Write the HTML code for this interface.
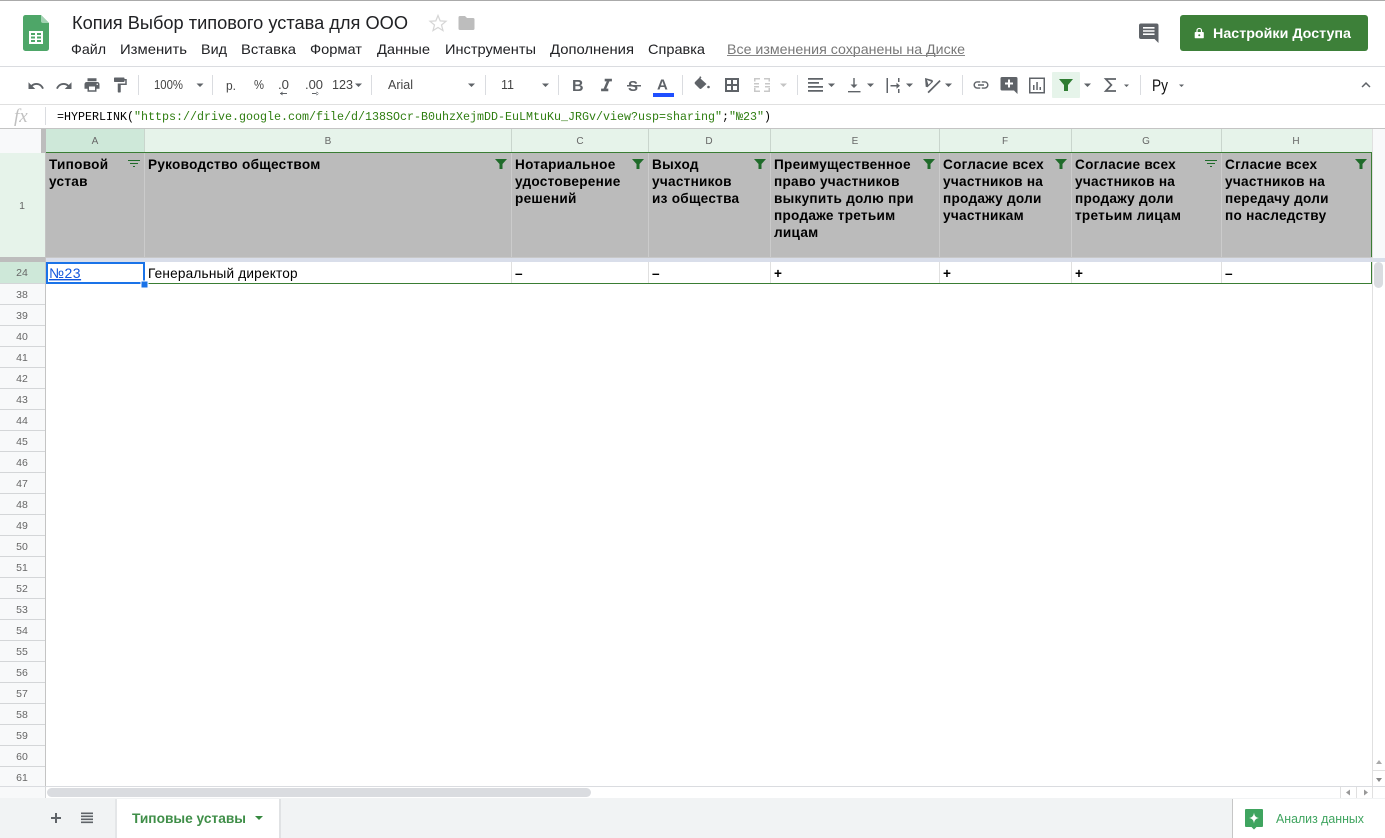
<!DOCTYPE html>
<html lang="ru"><head><meta charset="utf-8"><title>Копия Выбор типового устава для ООО</title>
<style>
html,body{margin:0;padding:0;width:1385px;height:838px;overflow:hidden;background:#fff}
svg{display:block;position:absolute;left:0;top:0}
text{font-family:"Liberation Sans",sans-serif}
.m{font-size:13.6px;fill:#202124}
.tb{font-size:12.8px;fill:#444}
.h{font-size:13.6px;font-weight:bold;fill:#000;letter-spacing:.27px}
.c{font-size:13.6px;fill:#000;letter-spacing:.2px}
.l{font-size:10px;fill:#666;text-anchor:middle}
.r{font-size:10.5px;fill:#666;text-anchor:middle}
.i{fill:#5f6368}
</style></head><body>
<svg width="1385" height="838" viewBox="0 0 1385 838" xmlns="http://www.w3.org/2000/svg">
<rect width="1385" height="838" fill="#fff"/>
<rect width="1385" height="1" fill="#aaa"/>

<!-- logo -->
<path d="M26 15h15l8 8v25.500a2.500 2.500 0 0 1-2.500 2.500h-21a2.500 2.500 0 0 1-2.500-2.500v-31a2.500 2.500 0 0 1 2.500-2.500z" fill="#4ea668"/>
<path d="M41 15l8 8h-6a2 2 0 0 1-2-2z" fill="#a3d3b3"/>
<path d="M29 31h14v13h-14zM31 33v2h4v-2zM37 33v2h4v-2zM31 36.500v2h4v-2zM37 36.500v2h4v-2zM31 40v2h4v-2zM37 40v2h4v-2z" fill="#fff" fill-rule="evenodd"/>

<text x="72" y="29" font-size="18" fill="#202124" textLength="336" lengthAdjust="spacingAndGlyphs">Копия Выбор типового устава для ООО</text>
<path d="M438 15.500l2.200 5.400 5.800.4-4.500 3.700 1.500 5.600-5-3.100-5 3.100 1.500-5.600-4.500-3.700 5.800-.4z" fill="none" stroke="#d5d5d5" stroke-width="1.200"/>
<path d="M460 16h5l2 2h6a1.500 1.500 0 0 1 1.500 1.500v9a1.500 1.500 0 0 1-1.500 1.500h-13a1.500 1.500 0 0 1-1.500-1.500v-11a1.500 1.500 0 0 1 1.500-1.500z" fill="#bdbdbd"/>

<text class="m" x="71" y="54" textLength="35" lengthAdjust="spacingAndGlyphs">Файл</text>
<text class="m" x="120" y="54" textLength="67" lengthAdjust="spacingAndGlyphs">Изменить</text>
<text class="m" x="201" y="54" textLength="26" lengthAdjust="spacingAndGlyphs">Вид</text>
<text class="m" x="241" y="54" textLength="55" lengthAdjust="spacingAndGlyphs">Вставка</text>
<text class="m" x="310" y="54" textLength="52" lengthAdjust="spacingAndGlyphs">Формат</text>
<text class="m" x="377" y="54" textLength="53" lengthAdjust="spacingAndGlyphs">Данные</text>
<text class="m" x="445" y="54" textLength="91" lengthAdjust="spacingAndGlyphs">Инструменты</text>
<text class="m" x="550" y="54" textLength="84" lengthAdjust="spacingAndGlyphs">Дополнения</text>
<text class="m" x="648" y="54" textLength="57" lengthAdjust="spacingAndGlyphs">Справка</text>
<text x="727" y="54" font-size="13.6" fill="#777" textLength="238" lengthAdjust="spacingAndGlyphs">Все изменения сохранены на Диске</text>
<rect x="727" y="55" width="238" height="1" fill="#888"/>

<!-- comments + share -->
<path d="M1141 23.500h15.500a2 2 0 0 1 2 2v17.500l-4-4h-13.500a2 2 0 0 1-2-2v-11.500a2 2 0 0 1 2-2z" fill="#5f6368"/>
<path d="M1143 27h11.500v1.600h-11.500zM1143 30.200h11.500v1.600h-11.500zM1143 33.400h11.500v1.600h-11.500z" fill="#fff"/>
<rect x="1180" y="15" width="188" height="36" rx="3" fill="#3d8039"/>
<path d="M1195.500 32h7.500a.8.8 0 0 1 .8.800v4.700a.8.8 0 0 1-.8.800h-7.500a.8.8 0 0 1-.8-.8v-4.700a.8.8 0 0 1 .8-.8z" fill="#fff"/>
<path d="M1197 32v-1.300a2.250 2.250 0 0 1 4.500 0v1.300" fill="none" stroke="#fff" stroke-width="1.200"/>
<circle cx="1199.250" cy="35.200" r="1" fill="#3d8039"/>
<text x="1213" y="38" font-size="13.500" font-weight="bold" fill="#fff" textLength="138" lengthAdjust="spacingAndGlyphs">Настройки Доступа</text>

<!-- toolbar -->
<rect y="66" width="1385" height="1" fill="#dadce0"/>
<rect y="104" width="1385" height="1" fill="#e0e0e0"/>
<g fill="#dadce0">
<rect x="138" y="75" width="1" height="20"/><rect x="212" y="75" width="1" height="20"/><rect x="371" y="75" width="1" height="20"/><rect x="485" y="75" width="1" height="20"/><rect x="558" y="75" width="1" height="20"/><rect x="682" y="75" width="1" height="20"/><rect x="797" y="75" width="1" height="20"/><rect x="962" y="75" width="1" height="20"/><rect x="1140" y="75" width="1" height="20"/>
</g>
<g class="i">
<path transform="translate(27 77) scale(.75)" d="M12.500 8c-2.650 0-5.050.99-6.900 2.600L2 7v9h9l-3.620-3.620c1.390-1.160 3.160-1.880 5.120-1.880 3.540 0 6.550 2.310 7.600 5.500l2.370-.78C21.080 11.030 17.150 8 12.500 8z"/>
<path transform="translate(55 77) scale(.75)" d="M18.400 10.600C16.550 8.990 14.150 8 11.500 8c-4.650 0-8.580 3.030-9.960 7.220L3.900 16c1.050-3.190 4.050-5.500 7.600-5.500 1.950 0 3.730.72 5.120 1.880L13 16h9V7l-3.600 3.600z"/>
<path transform="translate(83 76) scale(.75)" d="M19 8H5c-1.660 0-3 1.340-3 3v6h4v4h12v-4h4v-6c0-1.660-1.340-3-3-3zm-3 11H8v-5h8v5zm3-7c-.55 0-1-.45-1-1s.45-1 1-1 1 .45 1 1-.45 1-1 1zm-1-9H6v4h12V3z"/>
<path transform="translate(111 76) scale(.75)" d="M18 4V3c0-.55-.45-1-1-1H5c-.55 0-1 .45-1 1v4c0 .55.45 1 1 1h12c.55 0 1-.45 1-1V6h1v4H9v11c0 .55.45 1 1 1h2c.55 0 1-.45 1-1v-9h8V4h-3z"/>
</g>
<text class="tb" x="154" y="89" textLength="29" lengthAdjust="spacingAndGlyphs">100%</text>
<text class="tb" x="226" y="90" textLength="10" lengthAdjust="spacingAndGlyphs">р.</text>
<text class="tb" x="254" y="89" textLength="10" lengthAdjust="spacingAndGlyphs">%</text>
<text class="tb" x="278" y="89" textLength="11" lengthAdjust="spacingAndGlyphs">.0</text>
<text class="tb" x="305" y="89" textLength="18" lengthAdjust="spacingAndGlyphs">.00</text>
<text class="tb" x="332" y="89" textLength="21" lengthAdjust="spacingAndGlyphs">123</text>
<text class="tb" x="388" y="89" textLength="25" lengthAdjust="spacingAndGlyphs">Arial</text>
<text class="tb" x="501" y="89" textLength="13" lengthAdjust="spacingAndGlyphs">11</text>
<g fill="#5f6368">
<path d="M280 93h7v1h-7zM280 93.500l2.500-2v4zM312 93h7v1h-7zM319 93.500l-2.500-2v4z"/>
<path d="M196.500 83.500h7l-3.500 3.500zM355 83.500h7l-3.500 3.500zM468 83.500h7l-3.500 3.500zM542 83.500h7l-3.500 3.500zM828 83.500h7l-3.500 3.500zM867 83.500h7l-3.500 3.500zM906 83.500h7l-3.500 3.500zM945 83.500h7l-3.500 3.500zM1084 83.500h7l-3.500 3.500zM1124 84.500h5l-2.500 2.500zM1179 84.500h5l-2.500 2.500z"/>
</g>
<path d="M780 83.500h7l-3.500 3.500z" fill="#c4c4c4"/>
<text x="572" y="91" font-size="16" font-weight="bold" fill="#5f6368">B</text>
<path transform="translate(595.700 75.100) scale(.9)" fill="#5f6368" d="M10 4v3h2.210l-3.420 8H6v3h8v-3h-2.210l3.420-8H18V4z"/>
<text x="628" y="91" font-size="15" font-weight="bold" fill="#5f6368">S</text>
<rect x="627" y="85" width="14" height="1.500" fill="#5f6368"/>
<text x="657" y="89.500" font-size="15" font-weight="bold" fill="#5f6368">A</text>
<rect x="653" y="93" width="21" height="4" fill="#1f4fff"/>
<g fill="#5f6368">
<path d="M700 76l1.500 1.500-1 1 6 5.500-5 4.500a1.500 1.500 0 0 1-2 0l-4.500-4.500a1.500 1.500 0 0 1 0-2l4.500-4.500z"/>
<circle cx="708.500" cy="87" r="1.300"/>
<path d="M725 78h14v14h-14zM727 80v4h4v-4zM733 80v4h4v-4zM727 86v4h4v-4zM733 86v4h4v-4z" fill-rule="evenodd"/>
<path d="M808 78h15v1.800h-15zM808 82h11v1.800h-11zM808 86h15v1.800h-15zM808 90h15v1.800h-15z"/>
<path d="M853.300 78h1.400v6.500h2.800l-3.500 3.500-3.500-3.500h2.800zM848 91h12.500v1.400h-12.500z"/>
<path d="M886.500 78h1.500v15h-1.500zM898 78h1.500v4h-1.500zM898 89h1.500v4h-1.500zM890.500 85h6v-2.200l3.500 3-3.500 3v-2.300h-6z"/>
<path d="M925 78l7.500 2 .5 1.800-5.500 5.500-1.800-.5zM927 80l1.400 4.800 3-3z" fill-rule="evenodd"/>
<path d="M928 93l12-12 1.200 1.200-12 12z" transform="translate(-.5 -1)"/>
<path transform="translate(972 76) scale(.75)" d="M3.900 12c0-1.710 1.390-3.100 3.100-3.100h4V7H7c-2.760 0-5 2.240-5 5s2.240 5 5 5h4v-1.900H7c-1.710 0-3.100-1.390-3.100-3.100zM8 13h8v-2H8v2zm9-6h-4v1.900h4c1.710 0 3.100 1.390 3.100 3.100s-1.390 3.100-3.100 3.100h-4V17h4c2.760 0 5-2.240 5-5s-2.240-5-5-5z"/>
<path d="M1002 77h14a1.500 1.500 0 0 1 1.500 1.500v15.500l-3.500-3.500h-12a1.500 1.500 0 0 1-1.500-1.500v-10.500a1.500 1.500 0 0 1 1.500-1.500z"/>
<path d="M1008 79.500h2v3h3v2h-3v3h-2v-3h-3v-2h3z" fill="#fff"/>
<path d="M1029 77.500h16v16h-16zM1030.500 79v13h13v-13z" fill-rule="evenodd"/>
<path d="M1033 85h1.500v5h-1.500zM1036.300 82h1.500v8h-1.500zM1039.500 87h1.500v3h-1.500z"/>
<path transform="translate(1357 76) scale(.75)" d="M12 8l-6 6 1.410 1.410L12 10.830l4.590 4.580L18 14z"/>
</g>
<path d="M1116 79h-10.300l5.700 6-5.700 6h10.300" fill="none" stroke="#5f6368" stroke-width="1.700"/>
<g fill="#c8c8c8">
<path d="M754 78h6v1.500h-4.500v2h-1.500zM764 78h6v3.500h-1.500v-2h-4.500zM754 88h1.500v2.500h4.500v1.500h-6zM768.500 88h1.500v4h-6v-1.500h4.500zM754 83h5v1.500h-5zM765 83h5v1.500h-5zM754 86h5v1.500h-5zM765 86h5v1.500h-5z"/>
</g>
<rect x="1052" y="72" width="28" height="26" rx="1" fill="#e6f4ea"/>
<path d="M1059 79h14l-5 6v6h-4v-6z" fill="#2f7d32"/>
<text x="1152" y="91" font-size="17" fill="#111" textLength="16" lengthAdjust="spacingAndGlyphs">Ру</text>

<!-- formula bar -->
<text x="14" y="122" font-size="19" font-style="italic" fill="#c0c0c0" style="font-family:'Liberation Serif',serif">fx</text>
<rect x="45" y="107" width="1" height="18" fill="#dadce0"/>
<text x="57" y="120" font-size="12.400" fill="#000" textLength="714" lengthAdjust="spacingAndGlyphs" style="font-family:'Liberation Mono',monospace">=HYPERLINK(<tspan fill="#2e7d10">"https://drive.google.com/file/d/138SOcr-B0uhzXejmDD-EuLMtuKu_JRGv/view?usp=sharing"</tspan>;<tspan fill="#2e7d10">"№23"</tspan>)</text>
<rect y="128" width="1385" height="1" fill="#c4c4c4"/>

<!-- column headers -->
<rect x="0" y="129" width="41" height="24" fill="#f8f9fa"/>
<rect x="41" y="129" width="5" height="24" fill="#bdbdbd"/>
<rect x="46" y="129" width="98" height="23" fill="#cee8d9"/>
<rect x="144" y="129" width="1228" height="23" fill="#e6f3ea"/>
<rect x="1372" y="129" width="13" height="657" fill="#fff"/>
<rect x="1372" y="129" width="13" height="133" fill="#f8f9fa"/>
<g fill="#c9d5cd">
<rect x="144" y="129" width="1" height="23"/><rect x="511" y="129" width="1" height="23"/><rect x="648" y="129" width="1" height="23"/><rect x="770" y="129" width="1" height="23"/><rect x="939" y="129" width="1" height="23"/><rect x="1071" y="129" width="1" height="23"/><rect x="1221" y="129" width="1" height="23"/>
</g>
<text class="l" x="95" y="144">A</text><text class="l" x="328" y="144">B</text><text class="l" x="580" y="144">C</text><text class="l" x="709" y="144">D</text><text class="l" x="855" y="144">E</text><text class="l" x="1005" y="144">F</text><text class="l" x="1146" y="144">G</text><text class="l" x="1296" y="144">H</text>

<!-- row 1 -->
<rect x="46" y="153" width="1326" height="104" fill="#bbbbbb"/>
<rect x="0" y="153" width="45" height="104" fill="#e6f3ea"/>
<g fill="#cbcbcb">
<rect x="144" y="153" width="1" height="104"/><rect x="511" y="153" width="1" height="104"/><rect x="648" y="153" width="1" height="104"/><rect x="770" y="153" width="1" height="104"/><rect x="939" y="153" width="1" height="104"/><rect x="1071" y="153" width="1" height="104"/><rect x="1221" y="153" width="1" height="104"/>
</g>
<rect x="46" y="152" width="1326" height="1" fill="#3a7d34"/>
<rect x="0" y="257" width="46" height="5" fill="#bdbdbd"/>
<rect x="46" y="257" width="1326" height="1" fill="#c8c8c8"/>
<rect x="46" y="258" width="1339" height="4" fill="#d9deea"/>
<text class="r" x="22" y="209">1</text>

<text class="h" x="49" y="169">Типовой</text><text class="h" x="49" y="186">устав</text>
<text class="h" x="148" y="169">Руководство обществом</text>
<text class="h" x="515" y="169">Нотариальное</text><text class="h" x="515" y="186">удостоверение</text><text class="h" x="515" y="203">решений</text>
<text class="h" x="652" y="169">Выход</text><text class="h" x="652" y="186">участников</text><text class="h" x="652" y="203">из общества</text>
<text class="h" x="774" y="169">Преимущественное</text><text class="h" x="774" y="186">право участников</text><text class="h" x="774" y="203">выкупить долю при</text><text class="h" x="774" y="220">продаже третьим</text><text class="h" x="774" y="237">лицам</text>
<text class="h" x="943" y="169">Согласие всех</text><text class="h" x="943" y="186">участников на</text><text class="h" x="943" y="203">продажу доли</text><text class="h" x="943" y="220">участникам</text>
<text class="h" x="1075" y="169">Согласие всех</text><text class="h" x="1075" y="186">участников на</text><text class="h" x="1075" y="203">продажу доли</text><text class="h" x="1075" y="220">третьим лицам</text>
<text class="h" x="1225" y="169">Сгласие всех</text><text class="h" x="1225" y="186">участников на</text><text class="h" x="1225" y="203">передачу доли</text><text class="h" x="1225" y="220">по наследству</text>

<g fill="#1f6b2a">
<path d="M495 159h12l-4.500 5v5h-3v-5z"/><path d="M632 159h12l-4.500 5v5h-3v-5z"/><path d="M754 159h12l-4.500 5v5h-3v-5z"/><path d="M923 159h12l-4.500 5v5h-3v-5z"/><path d="M1055 159h12l-4.500 5v5h-3v-5z"/><path d="M1355 159h12l-4.500 5v5h-3v-5z"/>
<path d="M128 160h12v1h-12zM130 163h8v1h-8zM133 166h2v1h-2z"/><path d="M1205 160h12v1h-12zM1207 163h8v1h-8zM1210 166h2v1h-2z"/>
</g>

<!-- row 24 -->
<rect x="0" y="262" width="45" height="22" fill="#cee8d9"/>
<g fill="#e0e0e0">
<rect x="511" y="262" width="1" height="21"/><rect x="648" y="262" width="1" height="21"/><rect x="770" y="262" width="1" height="21"/><rect x="939" y="262" width="1" height="21"/><rect x="1071" y="262" width="1" height="21"/><rect x="1221" y="262" width="1" height="21"/>
</g>
<rect x="46" y="283" width="1326" height="1" fill="#3a7d34"/>
<rect x="1371" y="152" width="1" height="105" fill="#3a7d34"/>
<rect x="1371" y="262" width="1" height="22" fill="#3a7d34"/>
<text x="49" y="278" font-size="14" letter-spacing=".5" fill="#1155dd" text-decoration="underline">№23</text>
<text class="c" x="148" y="278">Генеральный директор</text>
<text class="c" x="515" y="278" font-weight="bold">–</text><text class="c" x="652" y="278" font-weight="bold">–</text><text class="c" x="774" y="278" font-weight="bold">+</text><text class="c" x="943" y="278" font-weight="bold">+</text><text class="c" x="1075" y="278" font-weight="bold">+</text><text class="c" x="1225" y="278" font-weight="bold">–</text>
<rect x="47" y="263" width="97" height="20" fill="none" stroke="#1a73e8" stroke-width="2"/>
<rect x="141" y="281" width="7" height="7" fill="#1a73e8" stroke="#fff" stroke-width="1"/>

<!-- row headers -->
<rect x="0" y="284" width="45" height="502" fill="#f8f9fa"/>
<rect x="45" y="153" width="1" height="633" fill="#c4c4c4"/>
<text class="r" x="22" y="276">24</text>
<text class="r" x="22" y="298">38</text><text class="r" x="22" y="319">39</text><text class="r" x="22" y="340">40</text><text class="r" x="22" y="361">41</text><text class="r" x="22" y="382">42</text><text class="r" x="22" y="403">43</text><text class="r" x="22" y="424">44</text><text class="r" x="22" y="445">45</text><text class="r" x="22" y="466">46</text><text class="r" x="22" y="487">47</text><text class="r" x="22" y="508">48</text><text class="r" x="22" y="529">49</text><text class="r" x="22" y="550">50</text><text class="r" x="22" y="571">51</text><text class="r" x="22" y="592">52</text><text class="r" x="22" y="613">53</text><text class="r" x="22" y="634">54</text><text class="r" x="22" y="655">55</text><text class="r" x="22" y="676">56</text><text class="r" x="22" y="697">57</text><text class="r" x="22" y="718">58</text><text class="r" x="22" y="739">59</text><text class="r" x="22" y="760">60</text><text class="r" x="22" y="781">61</text>
<path d="M0 283.500h45M0 304.500h45M0 325.500h45M0 346.500h45M0 367.500h45M0 388.500h45M0 409.500h45M0 430.500h45M0 451.500h45M0 472.500h45M0 493.500h45M0 514.500h45M0 535.500h45M0 556.500h45M0 577.500h45M0 598.500h45M0 619.500h45M0 640.500h45M0 661.500h45M0 682.500h45M0 703.500h45M0 724.500h45M0 745.500h45M0 766.500h45" stroke="#d4d6d8" stroke-width="1"/>

<!-- scrollbars -->
<rect x="1372" y="129" width="1" height="657" fill="#e0e0e0"/>
<rect x="1374" y="262" width="9" height="26" rx="4.500" fill="#dadce0"/>
<rect x="1373" y="770" width="12" height="1" fill="#e0e0e0"/>
<path d="M1379 760l3 4h-6z" fill="#aaa"/>
<path d="M1376 778h6l-3 4z" fill="#888"/>
<rect y="786" width="1385" height="1" fill="#dadce0"/>
<rect y="787" width="1385" height="11" fill="#fff"/>
<rect y="787" width="45" height="11" fill="#f8f9fa"/>
<rect x="45" y="786" width="1" height="12" fill="#d4d6d8"/>
<rect x="47" y="788" width="544" height="9" rx="4.500" fill="#dadce0"/>
<rect x="1340" y="787" width="1" height="11" fill="#e0e0e0"/><rect x="1356" y="787" width="1" height="11" fill="#e0e0e0"/><rect x="1372" y="787" width="1" height="11" fill="#e0e0e0"/>
<path d="M1346 792.500l4-3v6z" fill="#999"/><path d="M1364 789.500l4 3-4 3z" fill="#999"/>

<!-- bottom bar -->
<rect y="798" width="1385" height="40" fill="#f1f3f4"/>
<path d="M51 817h10v2h-10zM55 813h2v10h-2z" fill="#5f6368"/>
<path d="M81 812.500h12v1.600h-12zM81 815.500h12v1.600h-12zM81 818.500h12v1.600h-12zM81 821.500h12v1.600h-12z" fill="#5f6368"/>
<rect x="115" y="799" width="2" height="39" fill="#e4e6e8"/>
<rect x="279" y="799" width="2" height="39" fill="#e0e2e4"/>
<rect x="117" y="799" width="162" height="39" fill="#fff"/>
<text x="132" y="823" font-size="14" font-weight="bold" fill="#35893f" textLength="114" lengthAdjust="spacingAndGlyphs" opacity=".95">Типовые уставы</text>
<path d="M255 816h8l-4 4z" fill="#35893f"/>
<rect x="1233" y="799" width="152" height="39" fill="#fff"/>
<rect x="1232" y="799" width="1" height="39" fill="#c6c6c6"/>
<path d="M1246 809h16a1 1 0 0 1 1 1v16a1 1 0 0 1-1 1h-5.500l-2.500 2.500-2.500-2.500h-5.500a1 1 0 0 1-1-1v-16a1 1 0 0 1 1-1z" fill="#3fa45f"/>
<path d="M1254 812.500c.5 3.500 1.500 4.800 5 5.500-3.500.7-4.500 2-5 5.500-.5-3.500-1.500-4.800-5-5.500 3.500-.7 4.500-2 5-5.500z" fill="#fff"/>
<text x="1276" y="823" font-size="12.500" fill="#3fa45f" textLength="88" lengthAdjust="spacingAndGlyphs">Анализ данных</text>
</svg>
</body></html>
